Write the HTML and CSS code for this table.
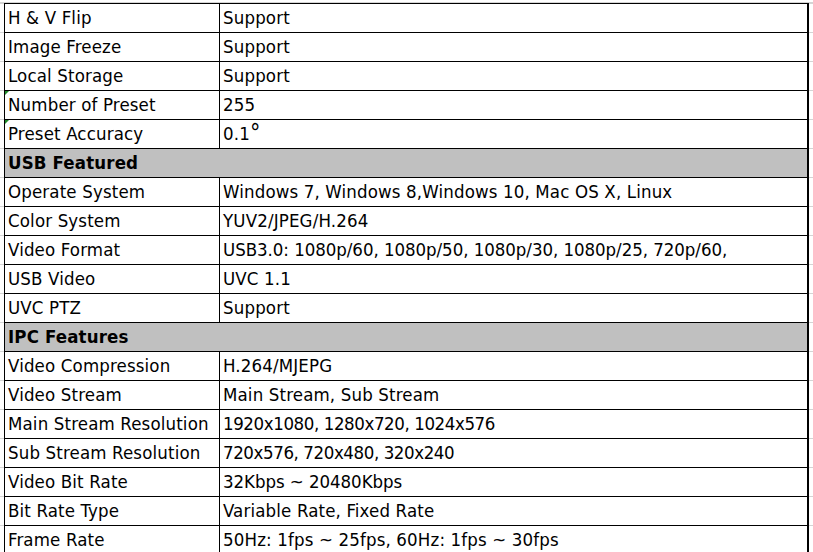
FILE: index.html
```html
<!DOCTYPE html>
<html>
<head>
<meta charset="utf-8">
<link rel="stylesheet" href="styles.css">
</head>
<body>
<table class="spec">
  <colgroup><col class="c1"><col class="c2"></colgroup>
  <tr><td>H &amp; V Flip</td><td>Support</td></tr>
  <tr><td>Image Freeze</td><td>Support</td></tr>
  <tr><td>Local Storage</td><td>Support</td></tr>
  <tr><td class="flag">Number of Preset</td><td>255</td></tr>
  <tr><td class="flag">Preset Accuracy</td><td>0.1<span class="deg">°</span></td></tr>
  <tr><td class="head" colspan="2">USB Featured</td></tr>
  <tr><td>Operate System</td><td>Windows 7, Windows 8,Windows 10, Mac OS X, Linux</td></tr>
  <tr><td>Color System</td><td>YUV2/JPEG/H.264</td></tr>
  <tr><td>Video Format</td><td class="mixed">USB3.0: 1080p/60, 1080p/50, 1080p/30, 1080p/25, 720p/60,</td></tr>
  <tr><td>USB Video</td><td>UVC 1.1</td></tr>
  <tr><td>UVC PTZ</td><td>Support</td></tr>
  <tr><td class="head" colspan="2">IPC Features</td></tr>
  <tr><td>Video Compression</td><td>H.264/MJEPG</td></tr>
  <tr><td>Video Stream</td><td>Main Stream, Sub Stream</td></tr>
  <tr><td>Main Stream Resolution</td><td class="num">1920x1080, 1280x720, 1024x576</td></tr>
  <tr><td>Sub Stream Resolution</td><td class="num">720x576, 720x480, 320x240</td></tr>
  <tr><td>Video Bit Rate</td><td class="mixed">32Kbps ~ 20480Kbps</td></tr>
  <tr><td>Bit Rate Type</td><td>Variable Rate, Fixed Rate</td></tr>
  <tr><td>Frame Rate</td><td>50Hz: 1fps ~ 25fps, 60Hz: 1fps ~ 30fps</td></tr>
</table>
</body>
</html>
```
FILE: styles.css
```css
html, body {
  margin: 0;
  padding: 0;
  height: 100%;
  overflow: hidden;
}
body {
  background-color: #fff;
  background-image: repeating-linear-gradient(to bottom, #d4d4d4 0, #d4d4d4 1px, #ffffff 1px, #ffffff 29px);
  background-position: 0 3px;
  font-family: "DejaVu Sans Condensed", "DejaVu Sans", sans-serif;
  font-size: 18.5px;
  letter-spacing: 0.15px;
  color: #000;
}
.spec {
  border-collapse: collapse;
  margin: 3px 0 0 4px;
  width: 805px;
  table-layout: fixed;
  background: #fff;
  border-right: 2px solid #000;
}
.c1 { width: 215px; }
.spec td {
  border: 1px solid #000;
  height: 28px;
  padding: 0 0 0 3px;
  box-sizing: border-box;
  line-height: 28px;
  vertical-align: bottom;
  white-space: nowrap;
  overflow: hidden;
  position: relative;
}
.spec td.num {
  letter-spacing: -0.4px;
}
.spec td.mixed {
  letter-spacing: -0.05px;
}
.spec td.head {
  background: #c0c0c0;
  font-weight: bold;
}
.deg {
  font-size: 1.25em;
  line-height: 0;
}
.spec td.flag::before {
  content: "";
  position: absolute;
  left: 0;
  top: 0;
  border-top: 4px solid #1f8a2a;
  border-right: 4px solid transparent;
}
```
